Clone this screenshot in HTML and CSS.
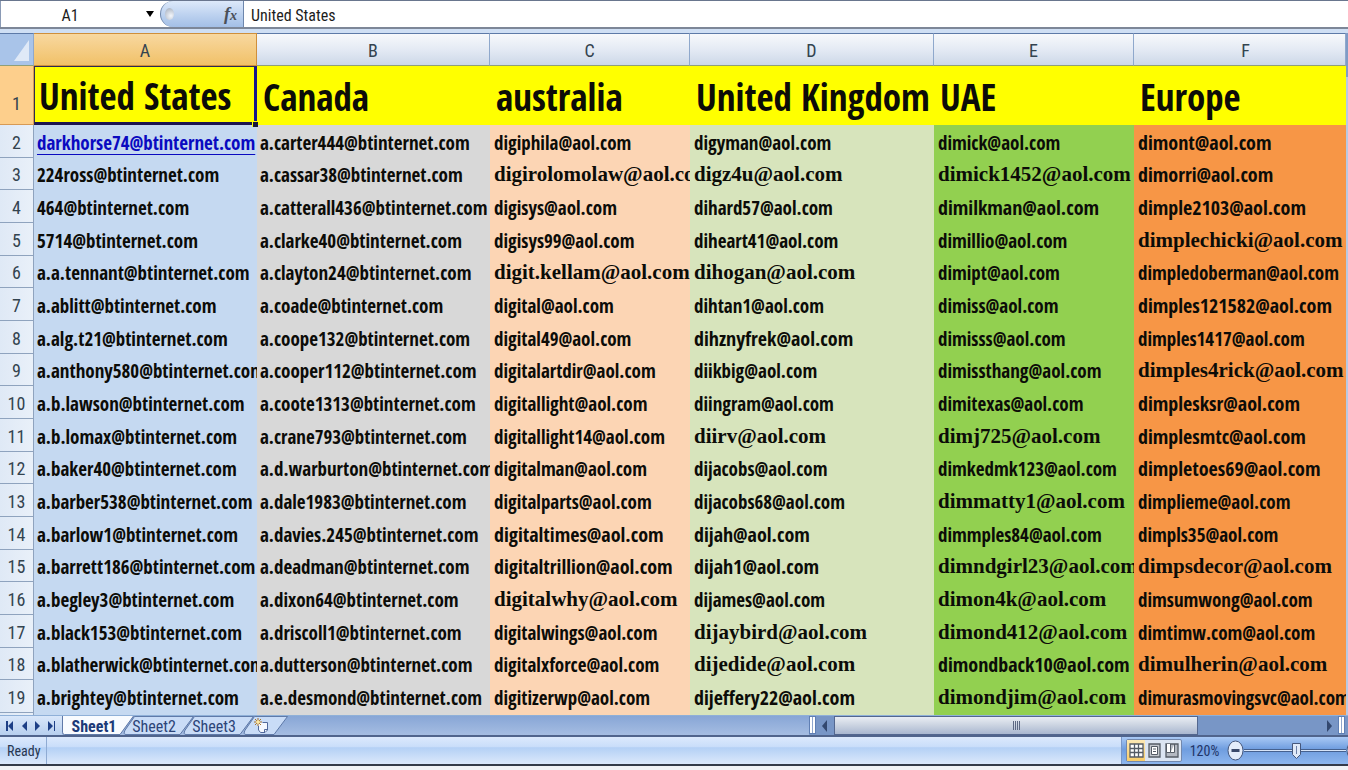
FILE: index.html
```
<!DOCTYPE html>
<html lang="en">
<head>
<meta charset="utf-8">
<title>Sheet1</title>
<link rel="stylesheet" href="styles.css">
</head>
<body>
<div class="app">
  <header class="formula-bar">
    <div class="name-box">
      <input class="name-input" type="text" value="A1" aria-label="Name box">
      <button class="name-arrow" type="button" aria-label="Show names"><svg width="8" height="6" viewBox="0 0 8 6"><path d="M0 0h8L4 6z"/></svg></button>
    </div>
    <button class="fx" type="button" aria-label="Insert function"><span class="knob"></span><span class="fx-label">f<span class="fx-sub">x</span></span></button>
    <input class="formula-input" type="text" value="United States" aria-label="Formula">
  </header>

  <main class="grid-area">
    <table class="sheet">
      <colgroup><col class="w-head"><col class="w-a"><col class="w-b"><col class="w-c"><col class="w-d"><col class="w-e"><col></colgroup>
      <thead>
        <tr><th class="corner"><svg width="15" height="21" viewBox="0 0 15 21"><path d="M15 0v21H0z" fill="#dfe9f7"/></svg></th><th class="picked">A</th><th>B</th><th>C</th><th>D</th><th>E</th><th class="last">F</th></tr>
      </thead>
      <tbody id="rows">
        <tr class="title-row"><th class="picked">1</th><td class="active">United States<span class="fill-handle"></span></td><td>Canada</td><td>australia</td><td>United Kingdom</td><td>UAE</td><td>Europe</td></tr>
      </tbody>
    </table>
    <div class="edge"></div>
  </main>

  <div class="tab-bar">
    <div class="tab-nav">
      <button type="button" aria-label="First sheet"><svg width="8" height="10" viewBox="0 0 8 10"><path d="M0 0h2v10H0zM7 0v10L2 5z"/></svg></button>
      <button type="button" aria-label="Previous sheet"><svg width="5" height="10" viewBox="0 0 5 10"><path d="M5 0v10L0 5z"/></svg></button>
      <button type="button" aria-label="Next sheet"><svg width="5" height="10" viewBox="0 0 5 10"><path d="M0 0v10l5-5z"/></svg></button>
      <button type="button" aria-label="Last sheet"><svg width="8" height="10" viewBox="0 0 8 10"><path d="M6 0h1v10H6zM0 0v10l5-5z"/></svg></button>
    </div>
    <div class="tabs">
      <button class="tab current" type="button"><svg class="tab-shape" viewBox="0 0 72 20" preserveAspectRatio="none"><path d="M.5 0v17q0 2.500 2 2.500H58L71.500 0"/></svg><span>Sheet1</span></button>
      <button class="tab" type="button"><svg class="tab-shape" viewBox="0 0 72 20" preserveAspectRatio="none"><path d="M12.500.5L3 15q-2 4.500 1 4.500H58L71.500.5z"/></svg><span>Sheet2</span></button>
      <button class="tab" type="button"><svg class="tab-shape" viewBox="0 0 72 20" preserveAspectRatio="none"><path d="M12.500.5L3 15q-2 4.500 1 4.500H58L71.500.5z"/></svg><span>Sheet3</span></button>
      <button class="tab new-tab" type="button" aria-label="Insert worksheet"><svg class="tab-shape" viewBox="0 0 46 20" preserveAspectRatio="none"><path d="M12.500.5L3 15q-2 4.500 1 4.500H32L45.500.5z"/></svg><svg class="new-icon" width="16" height="16" viewBox="0 0 16 16"><path d="M4.500 4.500h9V12l-2 2.500H6.500l-2-2z" fill="#f4f8ff"/><path d="M8.500 4.500h5V12l-2.500 2.500H6.500L4.500 12V8" fill="none" stroke="#51699c"/><path d="M10.500 14V11.500h3" fill="none" stroke="#51699c"/><path d="M4 0v8M0 4h8M1 1l6 6M7 1L1 7" stroke="#a8732a"/><circle cx="4" cy="4" r="1.800" fill="#ffe9a0"/></svg></button>
    </div>
    <div class="scroller">
      <span class="split"></span>
      <button class="scroll-arrow" type="button" aria-label="Scroll left"><svg width="5" height="12" viewBox="0 0 5 12"><path d="M5 0v12L0 6z"/></svg></button>
      <div class="track"><div class="thumb"><i></i><i></i><i></i><i></i></div></div>
      <button class="scroll-arrow" type="button" aria-label="Scroll right"><svg width="5" height="12" viewBox="0 0 5 12"><path d="M0 0v12l5-6z"/></svg></button>
      <span class="split"></span>
    </div>
  </div>

  <footer class="status">
    <span class="ready">Ready</span>
    <div class="view-tools">
      <div class="views">
        <button class="view on" type="button" aria-label="Normal"><svg width="15" height="15" viewBox="0 0 15 15"><path d="M1 1h13v13H1zM1 5.500h13M1 9.500h13M5.500 1v13M9.500 1v13" fill="#fff" stroke="#555c66" stroke-width="1.300"/></svg></button>
        <button class="view" type="button" aria-label="Page layout"><svg width="13" height="15" viewBox="0 0 13 15"><path d="M1 1h11v13H1z" fill="#c3c7cd" stroke="#555c66" stroke-width="1.300"/><path d="M3.500 3.500h6v8h-6z" fill="#fff" stroke="#555c66"/><path d="M5 6h3M5 8.500h3" stroke="#555c66"/></svg></button>
        <button class="view" type="button" aria-label="Page break preview"><svg width="14" height="15" viewBox="0 0 14 15"><path d="M1 1h12v13H1z" fill="#b4b9c2" stroke="#555c66" stroke-width="1.300"/><path d="M1.500 1v8.500h4V1M5.500 9.500h4V1" fill="#fff" stroke="#555c66"/></svg></button>
      </div>
      <button class="percent" type="button">120%</button>
      <button class="zoom-btn" type="button" aria-label="Zoom out"><svg width="17" height="21" viewBox="0 0 17 21"><ellipse cx="8.500" cy="10.500" rx="7.500" ry="9.500" fill="#e3ecfa" stroke="#45577c"/><path d="M4.500 10.500h8" stroke="#39486a" stroke-width="3"/></svg></button>
      <input class="zoom-range" type="range" min="0" max="100" value="52" aria-label="Zoom">
      <button class="zoom-btn" type="button" aria-label="Zoom in"><svg width="17" height="21" viewBox="0 0 17 21"><ellipse cx="8.500" cy="10.500" rx="7.500" ry="9.500" fill="#e3ecfa" stroke="#45577c"/><path d="M4.500 10.500h8M8.500 6v9" stroke="#39486a" stroke-width="2"/></svg></button>
    </div>
  </footer>
</div>
<script src="sheet.js"></script>
</body>
</html>
```
FILE: sheet.js
```
// One line per row, one entry per column. Prefix "+" is the larger sans size, "*" is the serif face, "@" marks a hyperlink.
const data = `
@darkhorse74@btinternet.com a.carter444@btinternet.com digiphila@aol.com digyman@aol.com dimick@aol.com +dimont@aol.com
224ross@btinternet.com a.cassar38@btinternet.com *digirolomolaw@aol.com *digz4u@aol.com *dimick1452@aol.com +dimorri@aol.com
464@btinternet.com a.catterall436@btinternet.com digisys@aol.com dihard57@aol.com +dimilkman@aol.com +dimple2103@aol.com
5714@btinternet.com a.clarke40@btinternet.com digisys99@aol.com diheart41@aol.com dimillio@aol.com *dimplechicki@aol.com
a.a.tennant@btinternet.com a.clayton24@btinternet.com *digit.kellam@aol.com *dihogan@aol.com dimipt@aol.com dimpledoberman@aol.com
a.ablitt@btinternet.com a.coade@btinternet.com digital@aol.com dihtan1@aol.com dimiss@aol.com +dimples121582@aol.com
a.alg.t21@btinternet.com a.coope132@btinternet.com digital49@aol.com +dihznyfrek@aol.com dimisss@aol.com dimples1417@aol.com
a.anthony580@btinternet.com a.cooper112@btinternet.com digitalartdir@aol.com diikbig@aol.com dimissthang@aol.com *dimples4rick@aol.com
a.b.lawson@btinternet.com a.coote1313@btinternet.com digitallight@aol.com diingram@aol.com dimitexas@aol.com +dimplesksr@aol.com
a.b.lomax@btinternet.com a.crane793@btinternet.com digitallight14@aol.com *diirv@aol.com *dimj725@aol.com +dimplesmtc@aol.com
a.baker40@btinternet.com a.d.warburton@btinternet.com digitalman@aol.com dijacobs@aol.com dimkedmk123@aol.com +dimpletoes69@aol.com
a.barber538@btinternet.com a.dale1983@btinternet.com digitalparts@aol.com dijacobs68@aol.com *dimmatty1@aol.com dimplieme@aol.com
a.barlow1@btinternet.com a.davies.245@btinternet.com +digitaltimes@aol.com +dijah@aol.com dimmples84@aol.com dimpls35@aol.com
a.barrett186@btinternet.com a.deadman@btinternet.com +digitaltrillion@aol.com +dijah1@aol.com *dimndgirl23@aol.com *dimpsdecor@aol.com
a.begley3@btinternet.com a.dixon64@btinternet.com *digitalwhy@aol.com dijames@aol.com *dimon4k@aol.com dimsumwong@aol.com
a.black153@btinternet.com a.driscoll1@btinternet.com digitalwings@aol.com *dijaybird@aol.com *dimond412@aol.com dimtimw.com@aol.com
a.blatherwick@btinternet.com a.dutterson@btinternet.com digitalxforce@aol.com *dijedide@aol.com +dimondback10@aol.com *dimulherin@aol.com
a.brightey@btinternet.com a.e.desmond@btinternet.com digitizerwp@aol.com +dijeffery22@aol.com *dimondjim@aol.com dimurasmovingsvc@aol.com
`.trim().split('\n').map(line => line.split(' '));

const columns = ['a', 'b', 'c', 'd', 'e', 'f'];
const body = document.getElementById('rows');

data.forEach((cells, i) => {
  const row = document.createElement('tr');
  const head = document.createElement('th');
  head.textContent = i + 2;
  row.append(head);
  cells.forEach((entry, c) => {
    const cell = document.createElement('td');
    cell.className = 'col-' + columns[c];
    if (entry[0] === '@') {
      const link = document.createElement('a');
      link.href = '#';
      link.textContent = entry.slice(1);
      cell.append(link);
    } else if (entry[0] === '+' || entry[0] === '*') {
      cell.classList.add(entry[0] === '+' ? 'large' : 'serif');
      cell.textContent = entry.slice(1);
    } else {
      cell.textContent = entry;
    }
    row.append(cell);
  });
  body.append(row);
});

const spare = document.createElement('tr');
spare.className = 'spare';
spare.innerHTML = '<th></th>' + columns.map(c => `<td class="col-${c}"></td>`).join('');
body.append(spare);
```
FILE: styles.css
```
* { box-sizing: border-box; }
body {
  margin: 0;
  background: #f1f3f6;
  font-family: "Roboto Condensed", "Roboto", "Liberation Sans", sans-serif;
  font-size: 16px;
  color: #1c1c1c;
}
button, input { font: inherit; color: inherit; padding: 0; border: 0; background: none; }
button { display: flex; align-items: center; justify-content: center; }
.app { display: flex; flex-direction: column; height: 100vh; padding-bottom: 4px; overflow: hidden; }

/* Formula bar */
.formula-bar { display: flex; flex: none; height: 29px; border-top: 1px solid #69768e; border-bottom: 2px solid #7d8798; background: #fff; }
.name-box { display: flex; width: 160px; border-left: 1px solid #8a9ab5; }
.name-input { width: 138px; padding-top: 2px; text-align: center; }
.name-arrow { flex: 1; }
.fx { justify-content: space-between; width: 84px; padding: 0 6px 0 4px; border: 1px solid #6d86ac; border-top: 0; border-bottom: 0; border-radius: 14px 0 0 14px; background: linear-gradient(#dde9fa, #b9cfee 60%, #a3bfe6); }
.knob { width: 9px; height: 12px; border-radius: 50%; background: radial-gradient(circle at 65% 65%, #f3f6fb, #9fa9b9); }
.fx-label { font: italic bold 18px "Liberation Serif", serif; color: #4a4f59; }
.fx-sub { font-size: 14px; }
.formula-input { flex: 1; min-width: 0; padding: 2px 0 0 7px; }

/* Grid */
.grid-area { display: flex; flex: 1; min-height: 0; overflow: hidden; padding-top: 4px; background: #cfdff4; }
.edge { width: 2px; flex: none; background: linear-gradient(#7f9bc6 44px, #b9c9e2 44px); }
.sheet { flex: 1; width: 100%; table-layout: fixed; border-collapse: separate; border-spacing: 0; align-self: flex-start; }
.w-head { width: 34px; }
.w-a { width: 223px; }
.w-b { width: 233px; }
.w-c, .w-e { width: 200px; }
.w-d { width: 244px; }
th { padding: 0; font-weight: 400; font-size: 18px; color: #33434f; }
thead th { height: 33px; padding-top: 2px; border-top: 1px solid #5d7aa8; border-right: 1px solid #8fa8cc; border-bottom: 1px solid #8f9f78; background: linear-gradient(#f7f9fc, #e4eaf4 50%, #cdd8e8); }
thead .last { padding-left: 12px; }
thead .corner { padding: 4px 4px 0 0; background: #a9c4e9; text-align: right; line-height: 1; }
thead .picked { border-color: #cf8f3b; background: linear-gradient(#f8d8a0, #f1c168); }
tbody th { height: 33px; padding-top: 2px; border-right: 1px solid #8fa3be; border-bottom: 1px solid #8fa3be; background: linear-gradient(90deg, #dfe9f6, #e9f0f9); }
tbody th.picked { padding-top: 16px; border-color: #d79a55; background: #fdcf8c; }
td { padding: 2px 0 0 4px; overflow: hidden; white-space: nowrap; font: bold 19px/24px "Open Sans Condensed", "Roboto Condensed", sans-serif; color: #0c0c08; vertical-align: middle; }
tbody tr:nth-child(3n) th { height: 32px; }
td.large { font-size: 20px; }
td.serif { padding-top: 0; font: bold 21px/24px "Liberation Serif", serif; }
td a { color: #0a0ac0; text-decoration: underline; text-underline-offset: 4px; text-decoration-thickness: 1px; }
.title-row td { height: 59px; padding: 2px 0 0 6px; background: #ffff00; font-size: 37px; line-height: 50px; }
.title-row .active { position: relative; overflow: visible; padding: 2px 0 0 4px; border: 1px solid #2c2c50; border-right: 3px solid #16168a; border-bottom: 3px solid #1c1650; line-height: 48px; }
.fill-handle { position: absolute; right: -4px; bottom: -5px; width: 6px; height: 6px; border-top: 1px solid #ffff00; border-left: 1px solid #ffff00; background: #16163c; }
.col-a { background: #c5d9f1; }
.col-b { background: #d8d8d8; }
.col-c { background: #fcd5b4; }
.col-d { background: #d7e4bc; }
.col-e { background: #92d050; }
.col-f { background: #f79646; }
td.col-a, td.col-b { padding-left: 3px; }
tbody .spare th { height: 33px; }

/* Sheet tabs and horizontal scroll */
.tab-bar { display: flex; flex: none; height: 22px; border-top: 1px solid #8fb0d8; border-bottom: 2px solid #50648c; background: linear-gradient(#88a6d6, #a5bde2); font-size: 16px; color: #2c4478; }
.tab-nav { display: flex; flex: none; align-items: center; justify-content: space-between; width: 62px; padding: 0 6px; background: linear-gradient(#d9e7fa, #b7cfee); }
.tab-nav svg { fill: #1d3f86; }
.tabs { display: flex; flex: 1; min-width: 0; }
.tab { position: relative; width: 72px; margin-right: -12px; padding: 2px 8px 0 0; }
.tab span { position: relative; }
.tab-shape { position: absolute; top: 0; left: 0; width: 100%; height: 100%; fill: #c9dcf7; stroke: #5c76a6; }
.current { z-index: 1; font-weight: 700; color: #1d3a78; }
.current .tab-shape { fill: #f8fbff; }
.new-tab { width: 46px; padding: 0 6px 0 0; }
.new-icon { position: relative; }
.scroller { display: flex; flex: 0 0 40%; padding-right: 3px; background: #7896c6; }
.split { flex: none; width: 7px; margin-bottom: 1px; border: 1px solid #5f7fb4; background: linear-gradient(90deg, #fff 40%, #8fa6cc 40%, #8fa6cc 60%, #fff 60%); }
.scroll-arrow { flex: none; width: 18px; }
.scroll-arrow svg { fill: #33486f; }
.track { flex: 1; }
.thumb { display: flex; align-items: center; justify-content: center; gap: 1px; width: 75%; height: 100%; border: 1px solid #53678f; background: linear-gradient(#e9edf4, #cdd5e2 45%, #a9b7d0); }
.thumb i { width: 1px; height: 9px; background: #5c6883; }

/* Status bar */
.status { display: flex; flex: none; height: 29px; border-bottom: 2px solid #343b49; background: linear-gradient(#dce9fc, #cadefa 35%, #b4d0f5 40%, #cfe1f9 80%, #dbe8fb); font-size: 14px; color: #27364f; }
.ready { display: flex; align-items: center; width: 47px; padding-left: 7px; border-right: 1px solid #8fabd3; }
.view-tools { display: flex; align-items: center; flex: none; width: 227px; margin-left: auto; padding-left: 4px; border-left: 1px solid #7997c7; background: linear-gradient(#a9c9f5, #6f9ddf 45%, #8db6ee); }
.views { display: flex; flex: none; height: 23px; border: 1px solid #7288ad; border-radius: 2px; background: #dce5f2; }
.view { width: 18px; }
.on { background: linear-gradient(#fce8b4, #f8cc68); }
.percent { flex: none; width: 45px; color: #1f3568; }
.zoom-btn { flex: none; width: 17px; }
.zoom-range { -webkit-appearance: none; appearance: none; flex: none; width: 102px; height: 22px; margin: 0; background: linear-gradient(#d8e5f8, #d8e5f8) center / 100% 1px no-repeat, linear-gradient(#45618f, #45618f) center / 100% 3px no-repeat; }
.zoom-range::-webkit-slider-thumb { -webkit-appearance: none; width: 11px; height: 18px; border: 0; background: url("data:image/svg+xml,%3Csvg xmlns='http://www.w3.org/2000/svg' width='11' height='18'%3E%3Cpath d='M1.500 1.500h8v11l-4 4-4-4z' fill='%23dfe9f8' stroke='%2345577c'/%3E%3Cpath d='M5.500 4v8' stroke='%236c80a6'/%3E%3C/svg%3E"); }
```
